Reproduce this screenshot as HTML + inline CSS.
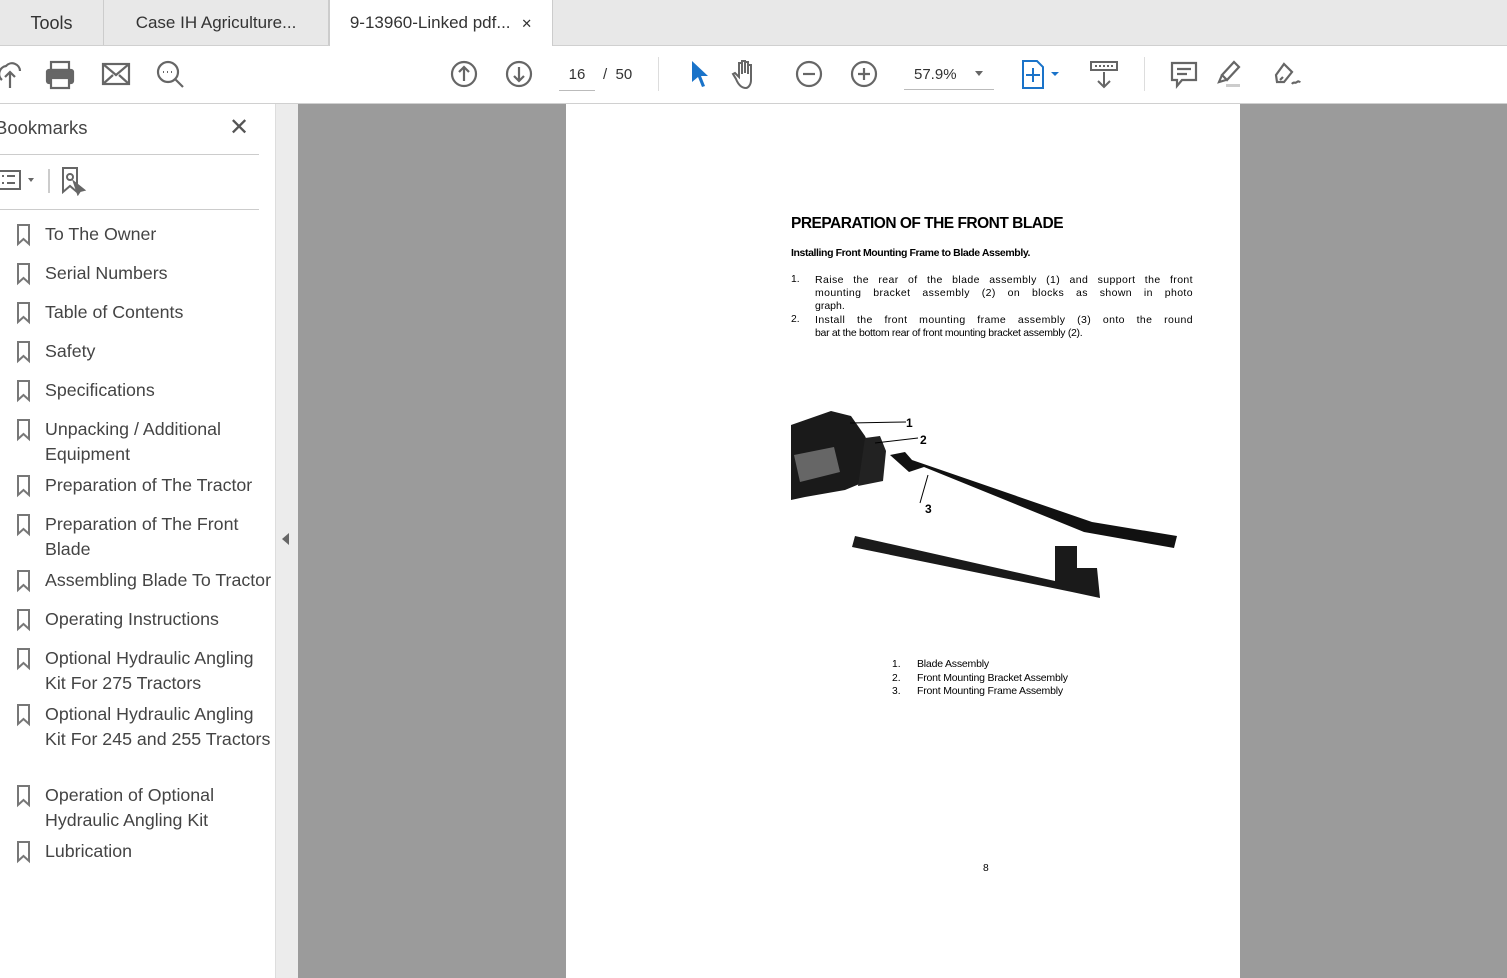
<!DOCTYPE html>
<html><head><style>
body{margin:0;width:1507px;height:978px;overflow:hidden;font-family:"Liberation Sans",sans-serif;background:#fff;position:relative}
.abs{position:absolute}
.tab{position:absolute;top:0;height:45px;line-height:46px;font-size:17px;color:#333;text-align:center;border-right:1px solid #ccc;box-sizing:border-box}
.bm{position:absolute;left:45px;font-size:17.8px;color:#444;line-height:25px;white-space:nowrap}
svg{position:absolute}
.pt{position:absolute;font-size:10.3px;color:#000;font-family:"Liberation Sans",sans-serif;white-space:nowrap}
.jl{position:absolute;left:815px;width:378px;font-size:10.5px;text-align:justify;text-align-last:justify;letter-spacing:0.4px;word-spacing:2px;white-space:nowrap}
</style></head><body>
<div class="abs" style="left:0;top:0;width:1507px;height:45px;background:#e8e8e8;border-bottom:1px solid #d0d0d0"></div>
<div class="tab" style="left:0;width:104px;font-size:18px">Tools</div>
<div class="tab" style="left:104px;width:225px">Case IH Agriculture...</div>
<div class="tab" style="left:329px;width:224px;background:#fff;height:46px;border-left:1px solid #ccc">9-13960-Linked pdf... <span style="font-size:13px;margin-left:6px">✕</span></div>
<div class="abs" style="left:0;top:46px;width:1507px;height:57px;background:#fff;border-bottom:1px solid #d0d0d0"></div>
<svg style="left:0;top:58px" width="200" height="34" fill="none" stroke="#666" stroke-width="2.2">
<path d="M2 22a8 8 0 0 1 4-14 8 8 0 0 1 14 5"/><path d="M10 30V14m-5 5l5-5 5 5"/>
<rect x="47" y="12" width="26" height="13" rx="2" fill="#666"/><rect x="51" y="4" width="18" height="8"/><rect x="51" y="20" width="18" height="10" fill="#fff"/>
<rect x="103" y="6" width="26" height="20"/><path d="M103 6l13 11 13-11M103 26l10-9m16 9l-10-9"/>
<circle cx="168" cy="14" r="10"/><path d="M175 21l8 8"/><path d="M163 14h1m3 0h1m3 0h1" stroke-width="2"/>
</svg>
<svg style="left:448px;top:58px" width="450" height="34" fill="none" stroke="#666" stroke-width="2.2">
<circle cx="16" cy="16" r="12"/><path d="M16 23V9m-5 5l5-5 5 5"/>
<circle cx="71" cy="16" r="12"/><path d="M71 9v14m-5-5l5 5 5-5"/>
<circle cx="361" cy="16" r="12"/><path d="M355 16h12"/>
<circle cx="416" cy="16" r="12"/><path d="M410 16h12M416 10v12"/>
</svg>
<div class="abs" style="left:559px;top:64px;width:36px;height:26px;border-bottom:1px solid #bbb;font-size:15px;color:#333;text-align:center;line-height:22px">16</div>
<div class="abs" style="left:603px;top:64px;font-size:15px;color:#333;line-height:22px">/ &nbsp;50</div>
<div class="abs" style="left:658px;top:57px;width:1px;height:34px;background:#ddd"></div>
<svg style="left:688px;top:58px" width="90" height="34"><path d="M4 3l16 15h-7l4 10-3 1-4-10-6 5z" fill="#1a73c9"/>
<path d="M58 30c-5 0-8-4-10-9l-3-5 2-1 4 4V5h3v11V3h3v12V4h3v12V7h3v15c0 5-3 8-5 8z" fill="none" stroke="#666" stroke-width="2"/></svg>
<div class="abs" style="left:904px;top:64px;width:90px;height:26px;border-bottom:1px solid #bbb;font-size:15px;color:#333;line-height:22px;padding-left:10px;box-sizing:border-box;white-space:nowrap">57.9%</div>
<div class="abs" style="left:975px;top:71px;width:0;height:0;border-left:4px solid transparent;border-right:4px solid transparent;border-top:5px solid #666"></div>
<svg style="left:1018px;top:58px" width="120" height="34" fill="none" stroke-width="2">
<path d="M5 3h14l6 6v21H5z" stroke="#1a73c9"/><path d="M15 10v14M8 17h14" stroke="#1a73c9"/><path d="M33 14l4 4 4-4z" fill="#1a73c9"/>
<rect x="73" y="4" width="26" height="8" stroke="#666"/><path d="M86 14v14m-6-5l6 6 6-6" stroke="#666"/><path d="M77 8h18" stroke="#666" stroke-dasharray="2 2"/>
</svg>
<div class="abs" style="left:1144px;top:57px;width:1px;height:34px;background:#ddd"></div>
<svg style="left:1168px;top:58px" width="150" height="34" fill="none" stroke="#666" stroke-width="2.2">
<path d="M4 5h24v17H14l-5 6v-6H4z"/><path d="M9 11h14M9 16h10"/>
<path d="M66 4l5 5-12 13-5-5z"/><path d="M54 17l-3 7 7-2" /><rect x="58" y="26" width="14" height="3" fill="#ccc" stroke="none"/>
<path d="M116 6l8 8-8 10h-7l-1-7zM112 22l3-3M124 26c2-3 3 0 5-2s2 1 3-1"/>
</svg>
<div class="abs" style="left:0;top:104px;width:275px;height:874px;background:#fff;border-right:1px solid #ddd;overflow:hidden">
<div class="abs" style="left:-5px;top:13px;font-size:18.5px;color:#444">Bookmarks</div>
<div class="abs" style="left:229px;top:9px;font-size:24px;color:#555">✕</div>
<div class="abs" style="left:0;top:50px;width:259px;height:1px;background:#ccc"></div>
<svg style="left:0;top:62px" width="100" height="30" fill="none" stroke="#666" stroke-width="2">
<rect x="-4" y="5" width="24" height="18"/><path d="M2 10h2m3 0h8M2 17h2m3 0h8"/><path d="M28 12l3 4 3-4z" fill="#666" stroke="none"/>
<path d="M49 3v24" stroke="#ccc"/><path d="M63 2h14v24l-7-6-7 6z"/><circle cx="70" cy="11" r="3"/><path d="M74 16l10 8-4 1 -2 3z" fill="#666"/>
</svg>
<div class="abs" style="left:0;top:105px;width:259px;height:1px;background:#ccc"></div>
<div id="bms"></div>
</div>
<div class="abs" style="left:276px;top:104px;width:22px;height:874px;background:#ececec"></div>
<div class="abs" style="left:282px;top:533px;width:0;height:0;border-top:6px solid transparent;border-bottom:6px solid transparent;border-right:7px solid #666"></div>
<div class="abs" style="left:298px;top:104px;width:1209px;height:874px;background:#9b9b9b"></div>
<div class="abs" style="left:566px;top:104px;width:674px;height:874px;background:#fff"></div>
<div class="pt" style="left:791px;top:215px;font-size:15.5px;font-weight:bold;letter-spacing:-0.5px">PREPARATION OF THE FRONT BLADE</div>
<div class="pt" style="left:791px;top:247px;font-size:10.5px;font-weight:bold;letter-spacing:-0.4px">Installing Front Mounting Frame to Blade Assembly.</div>
<div class="pt" style="left:791px;top:274px">1.</div>
<div class="jl" style="top:274px">Raise the rear of the blade assembly (1) and support the front</div>
<div class="jl" style="top:287px">mounting bracket assembly (2) on blocks as shown in photo</div>
<div class="pt" style="left:815px;top:300px;font-size:10.5px">graph.</div>
<div class="pt" style="left:791px;top:314px">2.</div>
<div class="jl" style="top:314px">Install the front mounting frame assembly (3) onto the round</div>
<div class="pt" style="left:815px;top:327px;font-size:10.5px;letter-spacing:-0.3px">bar at the bottom rear of front mounting bracket assembly (2).</div>
<svg style="left:780px;top:400px" width="420" height="220">
<path d="M11 25l40-14 20 5 14 20 10 22-6 22-24 10-40 7-14 3z" fill="#1a1a1a"/>
<path d="M14 55l40-8 6 25-40 10z" fill="#666"/>
<path d="M85 38l15-2 6 15-3 30-25 5z" fill="#222"/>
<path d="M110 55l15-3 7 8 180 62 85 14-3 12-90-16-160-65-15 5z" fill="#111"/>
<path d="M72 147l220 45 28 6-3-30h-20v-22h-22v35l-200-45z" fill="#1a1a1a"/>
<path d="M70 23l56-1M95 43l43-5M148 75l-8 28" stroke="#000" stroke-width="1"/>
<text x="126" y="27" font-size="12" font-weight="bold" font-family="Liberation Sans">1</text>
<text x="140" y="44" font-size="12" font-weight="bold" font-family="Liberation Sans">2</text>
<text x="145" y="113" font-size="12" font-weight="bold" font-family="Liberation Sans">3</text>
</svg>
<div class="pt" style="left:892px;top:658px;line-height:13.5px">1.<br>2.<br>3.</div>
<div class="pt" style="left:917px;top:658px;line-height:13.5px;font-size:10.5px;letter-spacing:-0.2px">Blade Assembly<br>Front Mounting Bracket Assembly<br>Front Mounting Frame Assembly</div>
<div class="pt" style="left:983px;top:863px">8</div>
<script>
var items=[["To The Owner",234],["Serial Numbers",273],["Table of Contents",312],["Safety",351],["Specifications",390],["Unpacking / Additional<br>Equipment",429],["Preparation of The Tractor",485],["Preparation of The Front<br>Blade",524],["Assembling Blade To Tractor",580],["Operating Instructions",619],["Optional Hydraulic Angling<br>Kit For 275 Tractors",658],["Optional Hydraulic Angling<br>Kit For 245 and 255 Tractors",714],["Operation of Optional<br>Hydraulic Angling Kit",795],["Lubrication",851]];
var h="";items.forEach(function(i){var t=i[1]-104;h+='<div class="bm" style="top:'+(t-12)+'px">'+i[0]+'</div><svg style="left:16px;top:'+(t-11)+'px" width="16" height="24"><path d="M2 2h11v19l-5.5-5-5.5 5z" fill="none" stroke="#777" stroke-width="2"/></svg>';});
document.getElementById("bms").innerHTML=h;
</script>
</body></html>
